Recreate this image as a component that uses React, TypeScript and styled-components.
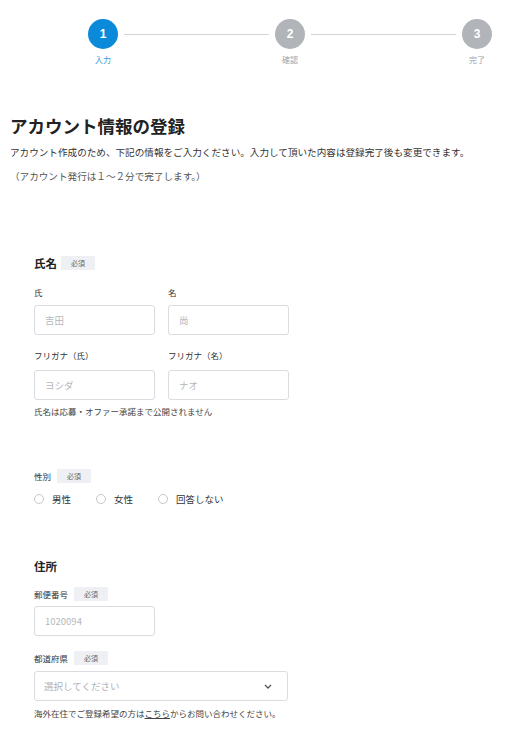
import { createGlobalStyle, styled } from 'styled-components'

const GlobalStyle = createGlobalStyle`
  body {
    margin: 0;
    background: #fff;
    font-family: "Noto Sans CJK JP", "Noto Sans", sans-serif;
    color: #222;
  }
`;

const Page = styled.div`
  padding: 0 10px 20px;
`;

const Stepper = styled.div`
  display: flex;
  align-items: flex-start;
  margin: 19px 19px 0 78px;
`;

const Step = styled.div`
  display: flex;
  flex-direction: column;
  align-items: center;
  width: 30px;
`;

const Circle = styled.div<{ $active?: boolean }>`
  width: 30px;
  height: 30px;
  border-radius: 50%;
  background: ${(p) => (p.$active ? '#0a8ad8' : '#b1b4b9')};
  color: #fff;
  font-family: "Liberation Sans", Arial, sans-serif;
  font-weight: 700;
  font-size: 12px;
  display: flex;
  align-items: center;
  justify-content: center;
`;

const StepLabel = styled.div<{ $active?: boolean }>`
  margin-top: 5px;
  font-size: 8px;
  white-space: nowrap;
  color: ${(p) => (p.$active ? '#3a9ad8' : '#a0a3a8')};
`;

const Line = styled.div`
  flex: 1;
  height: 1px;
  background: #d2d4d7;
  margin: 15px 6px 0;
`;

const Title = styled.h1`
  margin: 48px 0 0;
  font-size: 17.5px;
  font-weight: 700;
  line-height: 26px;
  color: #222;
`;

const Lead = styled.p<{ $muted?: boolean }>`
  margin: ${(p) => (p.$muted ? '10px 0 0' : '6px 0 0')};
  font-size: 9.6px;
  line-height: 14px;
  color: ${(p) => (p.$muted ? '#555' : '#333')};
`;

const Form = styled.form`
  padding-left: 24px;
`;

const Section = styled.div<{ $top: number }>`
  margin-top: ${(p) => p.$top}px;
`;

const SectionTitle = styled.div`
  display: flex;
  align-items: center;
  gap: 4px;
  font-size: 11.5px;
  font-weight: 700;
  line-height: 16px;
  color: #222;
`;

const Badge = styled.span`
  display: inline-flex;
  align-items: center;
  justify-content: center;
  width: 34px;
  height: 14px;
  background: #eef0f3;
  color: #666;
  font-size: 7px;
  font-weight: 400;
`;

const FieldLabel = styled.div<{ $gap?: number }>`
  display: flex;
  align-items: center;
  gap: 6px;
  font-size: 8.5px;
  line-height: 14px;
  color: #333;
  margin-bottom: ${(p) => p.$gap ?? 6}px;
`;

const Row = styled.div`
  display: grid;
  grid-template-columns: 121px 121px;
  column-gap: 13px;
  margin-top: 14px;
`;

const Field = styled.div<{ $top?: number }>`
  margin-top: ${(p) => p.$top ?? 0}px;
`;

const Input = styled.input<{ $w?: number }>`
  box-sizing: border-box;
  display: block;
  width: ${(p) => p.$w ?? 121}px;
  height: 30px;
  border: 1px solid #d9dce0;
  border-radius: 3px;
  padding: 0 10px;
  font-family: inherit;
  font-size: 9.5px;
  color: #333;
  outline: none;
  &::placeholder {
    color: #b5b8bc;
  }
`;

const Note = styled.div<{ $top: number }>`
  margin-top: ${(p) => p.$top}px;
  font-size: 8.5px;
  line-height: 12px;
  color: #444;
  a {
    color: #444;
    text-decoration: underline;
  }
`;

const Radios = styled.div`
  display: flex;
  margin-top: 9px;
`;

const RadioItem = styled.label<{ $w: number }>`
  display: flex;
  align-items: center;
  width: ${(p) => p.$w}px;
  font-size: 9.5px;
  line-height: 14px;
  color: #333;
`;

const RadioDot = styled.span`
  box-sizing: border-box;
  width: 10px;
  height: 10px;
  border: 1px solid #c4c7cb;
  border-radius: 50%;
  margin-right: 8px;
`;

const SelectBox = styled.div`
  box-sizing: border-box;
  width: 254px;
  height: 30px;
  border: 1px solid #d9dce0;
  border-radius: 3px;
  padding: 0 15px 0 9px;
  display: flex;
  align-items: center;
  justify-content: space-between;
  font-size: 9.5px;
  color: #b0b3b7;
`;

const App = () => {
  return (
    <Page>
      <GlobalStyle />
      <Stepper>
        <Step>
          <Circle $active>1</Circle>
          <StepLabel $active>入力</StepLabel>
        </Step>
        <Line />
        <Step>
          <Circle>2</Circle>
          <StepLabel>確認</StepLabel>
        </Step>
        <Line />
        <Step>
          <Circle>3</Circle>
          <StepLabel>完了</StepLabel>
        </Step>
      </Stepper>

      <Title>アカウント情報の登録</Title>
      <Lead>アカウント作成のため、下記の情報をご入力ください。入力して頂いた内容は登録完了後も変更できます。</Lead>
      <Lead $muted>（アカウント発行は１〜２分で完了します。）</Lead>

      <Form>
        <Section $top={72}>
          <SectionTitle>
            氏名 <Badge>必須</Badge>
          </SectionTitle>
          <Row>
            <Field>
              <FieldLabel>氏</FieldLabel>
              <Input placeholder="吉田" />
            </Field>
            <Field>
              <FieldLabel>名</FieldLabel>
              <Input placeholder="尚" />
            </Field>
            <Field $top={13}>
              <FieldLabel $gap={8}>フリガナ（氏）</FieldLabel>
              <Input placeholder="ヨシダ" />
            </Field>
            <Field $top={13}>
              <FieldLabel $gap={8}>フリガナ（名）</FieldLabel>
              <Input placeholder="ナオ" />
            </Field>
          </Row>
          <Note $top={5}>氏名は応募・オファー承諾まで公開されません</Note>
        </Section>

        <Section $top={52}>
          <FieldLabel $gap={0}>
            性別 <Badge>必須</Badge>
          </FieldLabel>
          <Radios>
            <RadioItem $w={62}>
              <RadioDot />
              男性
            </RadioItem>
            <RadioItem $w={62}>
              <RadioDot />
              女性
            </RadioItem>
            <RadioItem $w={90}>
              <RadioDot />
              回答しない
            </RadioItem>
          </Radios>
        </Section>

        <Section $top={52}>
          <SectionTitle>住所</SectionTitle>
          <Field $top={13}>
            <FieldLabel $gap={5}>
              郵便番号 <Badge>必須</Badge>
            </FieldLabel>
            <Input placeholder="1020094" />
          </Field>
          <Field $top={15}>
            <FieldLabel>
              都道府県 <Badge>必須</Badge>
            </FieldLabel>
            <SelectBox>
              選択してください
              <svg width="8" height="5" viewBox="0 0 8 5">
                <path d="M1 1l3 3 3-3" fill="none" stroke="#555" strokeWidth="1.3" />
              </svg>
            </SelectBox>
          </Field>
          <Note $top={6}>
            海外在住でご登録希望の方は<a href="#">こちら</a>からお問い合わせください。
          </Note>
        </Section>
      </Form>
    </Page>
  );
};

export default App;
